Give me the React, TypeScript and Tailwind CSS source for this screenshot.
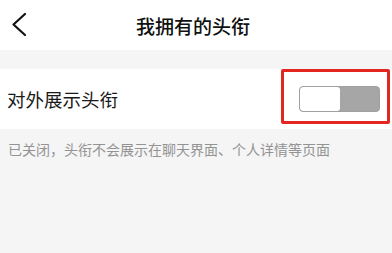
import React from "react";

export default function App() {
  const font = { fontFamily: '"Noto Sans CJK SC", "Noto Sans", sans-serif' };
  return (
    <div className="w-[392px] h-[253px] bg-[#f5f5f5] overflow-hidden" style={font}>
      <div className="h-[50px] bg-white relative flex items-center justify-center">
        <svg className="absolute left-0 top-0" width="40" height="50" viewBox="0 0 40 50">
          <polyline points="25,14 13.5,24.5 25,35" fill="none" stroke="#111" strokeWidth="2.2" strokeLinecap="round" strokeLinejoin="round" />
        </svg>
        <span className="text-[19px] font-medium text-[#111] leading-none -ml-[6px]">我拥有的头衔</span>
      </div>
      <div className="h-[19px]" />
      <div className="h-[60px] bg-white relative flex items-center justify-between pl-[7px] pr-[12px]">
        <span className="text-[18.5px] text-[#1a1a1a] leading-none">对外展示头衔</span>
        <div className="w-[81px] h-[26px] rounded-[4px] border border-[#a0a0a0] bg-[#a6a6a6] flex overflow-hidden">
          <div className="w-[40px] h-full bg-white rounded-[3px]" />
        </div>
        <div className="absolute left-[281px] top-0 w-[109px] h-[55px] border-[3px] border-[#e3261f] rounded-[2px]" />
      </div>
      <div className="pl-[8px] pt-[13px] text-[14px] leading-none text-[#939393]">
        已关闭，头衔不会展示在聊天界面、个人详情等页面
      </div>
    </div>
  );
}
